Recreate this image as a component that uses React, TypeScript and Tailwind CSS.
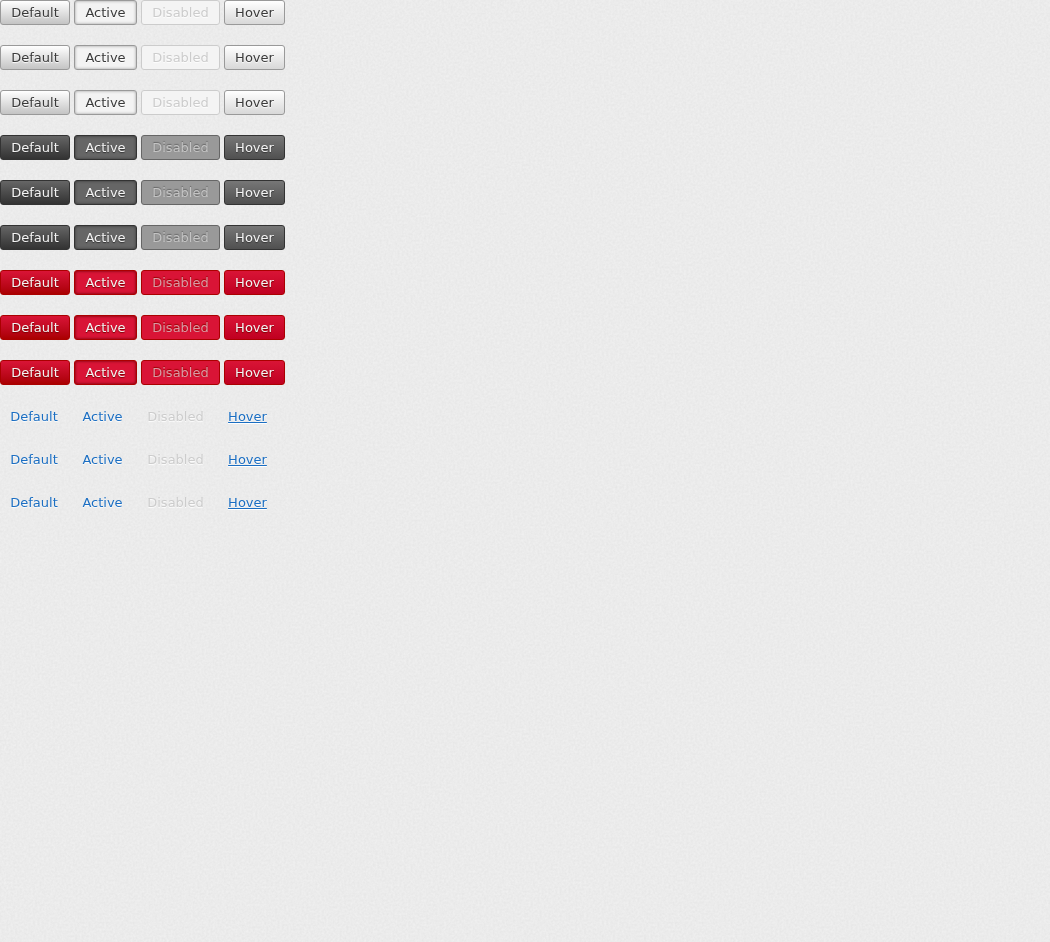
import React from "react";

type State = "Default" | "Active" | "Disabled" | "Hover";
type Variant = "light" | "dark" | "red" | "link";

const STATES: State[] = ["Default", "Active", "Disabled", "Hover"];
const VARIANTS: Variant[] = ["light", "dark", "red", "link"];

const BASE = "box-content rounded-[3px] px-[10px] text-[13px] leading-[23px] whitespace-nowrap";

const WIDTH: Record<State, string> = {
  Default: "min-w-[48px]",
  Active: "min-w-[41px]",
  Disabled: "min-w-[57px]",
  Hover: "min-w-[39px]",
};

const SHAPE: Record<Variant, string> = {
  light: "border [text-shadow:0_1px_1px_#ffffff]",
  dark: "border",
  red: "border",
  link: "[text-shadow:0_1px_1px_#ffffff]",
};

const STYLES: Record<Variant, Record<State, string>> = {
  light: {
    Default: "border-[#999999] bg-linear-to-b from-white to-[#c4c4c4] text-[#3a3a3a]",
    Active: "border-[#999999] bg-[#f3f3f3] text-[#3a3a3a] shadow-[inset_0_0_3px_#999999]",
    Disabled: "border-[#cccccc] bg-[#f4f4f4] text-[#cccccc]",
    Hover: "border-[#999999] bg-linear-to-b from-white to-[#d8d8d8] text-[#3a3a3a]",
  },
  dark: {
    Default:
      "border-[#333333] bg-linear-to-b from-[#666666] to-[#333333] text-[#f4f4f4] [text-shadow:0_1px_1px_#333333]",
    Active:
      "border-[#333333] bg-[#666666] text-[#f4f4f4] shadow-[inset_0_0_3px_#333333] [text-shadow:0_1px_1px_#333333]",
    Disabled:
      "border-[#666666] bg-[#999999] text-[#c4c4c4] [text-shadow:0_-1px_1px_#666666]",
    Hover:
      "border-[#333333] bg-linear-to-b from-[#777777] to-[#505050] text-[#f4f4f4] [text-shadow:0_1px_1px_#333333]",
  },
  red: {
    Default:
      "border-[#aa0000] bg-linear-to-b from-[#d91436] to-[#aa0000] text-[#f4f4f4] [text-shadow:0_1px_1px_#770000]",
    Active:
      "border-[#aa0000] bg-[#d91436] text-[#f4f4f4] shadow-[inset_0_0_3px_#660000] [text-shadow:0_1px_1px_#770000]",
    Disabled:
      "border-[#aa0000] bg-[#d91436] text-[#d99aa4] [text-shadow:0_-1px_1px_#990000]",
    Hover:
      "border-[#aa0000] bg-linear-to-b from-[#d91436] to-[#c00020] text-[#f4f4f4] [text-shadow:0_1px_1px_#770000]",
  },
  link: {
    Default: "text-[#1b6ec2]",
    Active: "text-[#1b6ec2]",
    Disabled: "text-[#cccccc]",
    Hover: "text-[#1b6ec2] underline",
  },
};

function PaperTexture() {
  return (
    <svg aria-hidden="true" className="pointer-events-none fixed inset-0 -z-10 h-full w-full">
      <filter id="paper" x="0" y="0" width="100%" height="100%" colorInterpolationFilters="sRGB">
        <feTurbulence type="fractalNoise" baseFrequency="0.45" numOctaves="2" seed="4" />
        <feColorMatrix
          type="matrix"
          values="0.05 0 0 0 0.897  0.05 0 0 0 0.897  0.05 0 0 0 0.897  0 0 0 0 1"
        />
      </filter>
      <rect width="100%" height="100%" filter="url(#paper)" />
    </svg>
  );
}

function ButtonRow({ variant }: { variant: Variant }) {
  return (
    <div className="flex gap-1">
      {STATES.map((state) => (
        <button
          key={state}
          type="button"
          disabled={state === "Disabled"}
          className={`${BASE} ${WIDTH[state]} ${SHAPE[variant]} ${STYLES[variant][state]}`}
        >
          {state}
        </button>
      ))}
    </div>
  );
}

export default function App() {
  return (
    <main className="isolate min-h-screen bg-[#ebebeb] font-['DejaVu_Sans',sans-serif]">
      <PaperTexture />
      <div className="flex flex-col gap-5">
        {VARIANTS.map((variant) =>
          [0, 1, 2].map((row) => <ButtonRow key={`${variant}-${row}`} variant={variant} />),
        )}
      </div>
    </main>
  );
}
